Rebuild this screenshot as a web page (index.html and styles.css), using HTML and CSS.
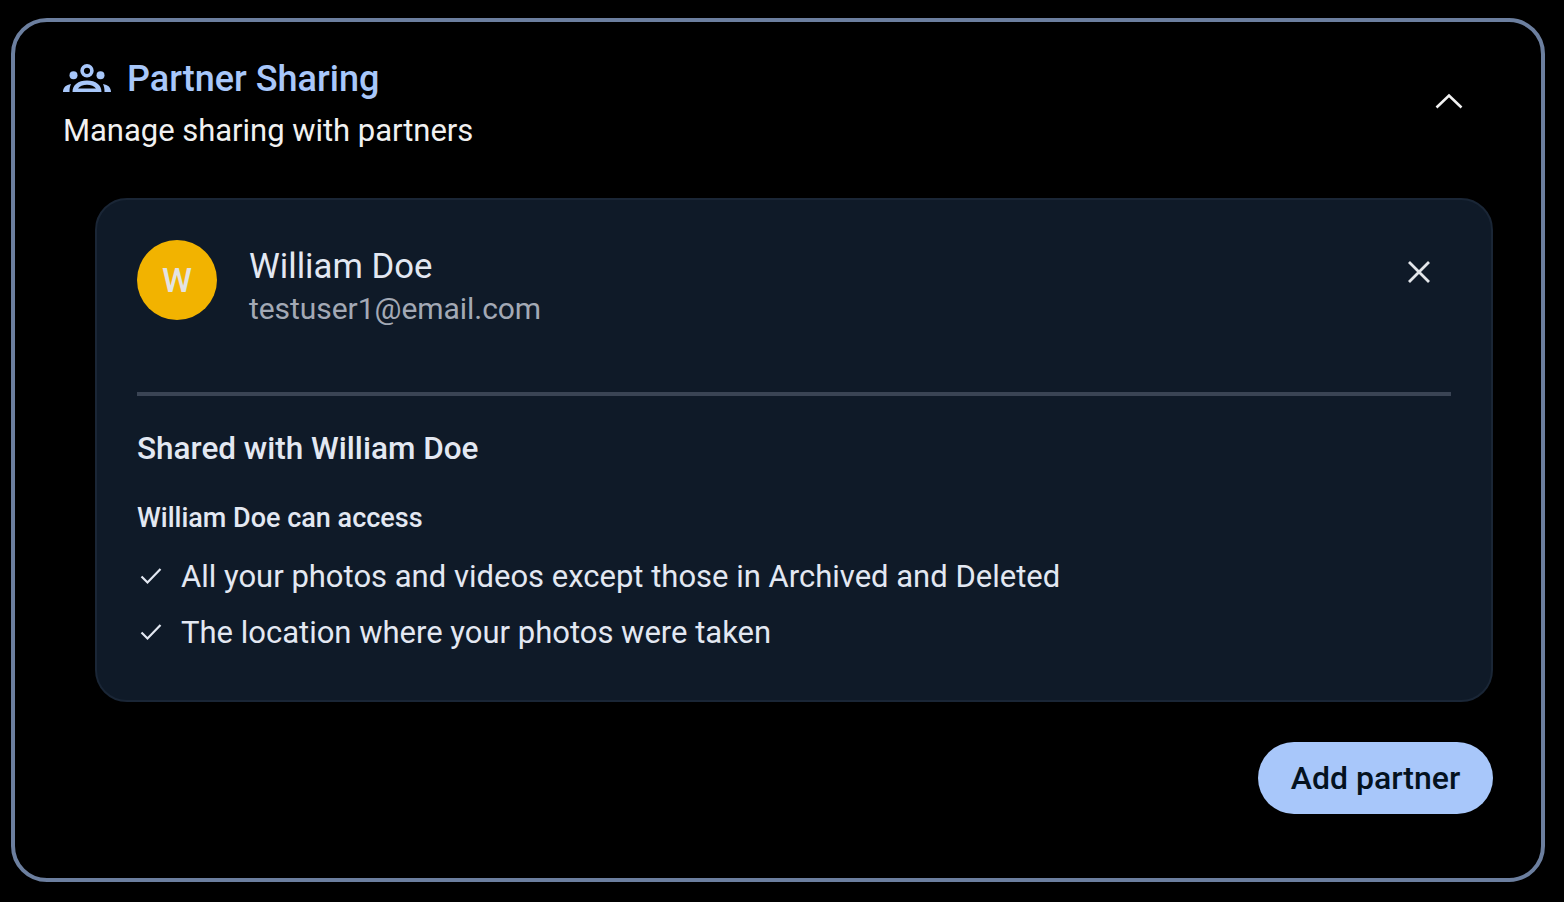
FILE: index.html
```html
<!DOCTYPE html>
<html lang="en">
<head>
<meta charset="utf-8">
<title>Partner Sharing</title>
<link rel="stylesheet" href="styles.css">
</head>
<body>
<section class="frame">
  <header class="head">
    <div class="head-text">
      <div class="title-row">
        <svg class="groups" viewBox="0 0 48 28" aria-hidden="true">
          <circle cx="24" cy="6.800" r="4.900" fill="none" stroke="#a8c7fa" stroke-width="3.600"/>
          <circle cx="10.500" cy="11.200" r="4" fill="#a8c7fa"/>
          <circle cx="37.500" cy="11.200" r="4" fill="#a8c7fa"/>
          <path d="M0 28C0 23.500 3 20.800 8 20C6.800 22.500 6.500 25 6.500 28Z" fill="#a8c7fa"/>
          <path d="M48 28C48 23.500 45 20.800 40 20C41.200 22.500 41.500 25 41.500 28Z" fill="#a8c7fa"/>
          <path fill-rule="evenodd" d="M9.500 28C9.500 21 15 16.500 24 16.500C33 16.500 38.500 21 38.500 28ZM15 24.500H33C31.500 22.300 28 20.800 24 20.800C20 20.800 16.500 22.300 15 24.500Z" fill="#a8c7fa"/>
        </svg>
        <h1 class="title">Partner Sharing</h1>
      </div>
      <p class="subtitle">Manage sharing with partners</p>
    </div>
    <svg class="chevron" viewBox="0 0 28 16" aria-hidden="true"><path d="M1.500 14.500L14 2.500L26.500 14.500" fill="none" stroke="#f1f1f1" stroke-width="2.600"/></svg>
  </header>

  <article class="card">
    <div class="person">
      <div class="avatar">W</div>
      <div class="who">
        <div class="name">William Doe</div>
        <div class="email">testuser1@email.com</div>
      </div>
      <svg class="close" viewBox="0 0 24 24" aria-hidden="true"><path d="M2 2L22 22M22 2L2 22" fill="none" stroke="#e3e6ea" stroke-width="2.800"/></svg>
    </div>
    <div class="rule"></div>
    <h2 class="shared">Shared with William Doe</h2>
    <h3 class="access">William Doe can access</h3>
    <ul class="perms">
      <li class="perm"><svg class="check" viewBox="0 0 22 18" aria-hidden="true"><path d="M1.500 9.500L7.500 15.500L20.500 2" fill="none" stroke="#e3e8f2" stroke-width="2.200"/></svg><span>All your photos and videos except those in Archived and Deleted</span></li>
      <li class="perm"><svg class="check" viewBox="0 0 22 18" aria-hidden="true"><path d="M1.500 9.500L7.500 15.500L20.500 2" fill="none" stroke="#e3e8f2" stroke-width="2.200"/></svg><span>The location where your photos were taken</span></li>
    </ul>
  </article>

  <div class="actions"><button class="add" type="button">Add partner</button></div>
</section>
</body>
</html>
```
FILE: styles.css
```css
* { box-sizing: border-box; }
html, body { height: 100%; }
body {
  margin: 0;
  background: #000;
  font-family: Roboto, "Noto Sans", sans-serif;
  overflow: hidden;
}
.frame {
  margin: 18px 19px 0 11px;
  height: 864px;
  border: 4px solid #6c7f9f;
  border-radius: 36px;
  padding: 34px 48px 0 48px;
}
.head {
  display: flex;
  justify-content: space-between;
  align-items: flex-start;
  height: 142px;
}
.head-text { display: flex; flex-direction: column; }
.title-row { display: flex; align-items: center; gap: 16px; height: 46px; }
.groups { width: 48px; height: 28px; margin-top: -2px; }
.title {
  margin: 0;
  font-size: 36px;
  line-height: 46px;
  font-weight: 500;
  color: #a8c7fa;
}
.subtitle {
  margin: 9px 0 0;
  font-size: 31px;
  line-height: 40px;
  color: #f1f1f1;
  letter-spacing: -0.03px;
}
.chevron { width: 28px; height: 16px; margin: 37px 30px 0 0; }
.card {
  margin-left: 32px;
  height: 504px;
  background: #0f1a28;
  border: 2px solid #1a2636;
  border-radius: 32px;
  padding: 40px 40px 0;
}
.person { display: flex; align-items: flex-start; height: 152px; }
.avatar {
  width: 80px;
  height: 80px;
  border-radius: 50%;
  background: #f2b300;
  color: #e3e3e3;
  display: flex;
  align-items: center;
  justify-content: center;
  font-size: 34px;
  font-weight: 500;
  flex: none;
}
.who { margin-left: 32px; flex: 1; }
.name { font-size: 34.700px; line-height: 46px; color: #e3e8f2; margin-top: 3px; }
.email { font-size: 30px; line-height: 40px; color: #a3a9b5; letter-spacing: -0.05px; }
.close { width: 24px; height: 24px; margin: 20px 20px 0 0; }
.rule { height: 4px; background: #3a4454; }
.shared {
  margin: 33px 0 0;
  font-size: 31.500px;
  line-height: 40px;
  font-weight: 500;
  color: #e3e8f2;
}
.access {
  margin: 32px 0 0;
  font-size: 27px;
  line-height: 34px;
  font-weight: 500;
  color: #e3e8f2;
}
.perms { list-style: none; margin: 13px 0 0; padding: 0; }
.perm {
  display: flex;
  align-items: center;
  height: 56px;
  font-size: 31px;
  color: #e3e8f2;
}
.check { width: 22px; height: 18px; margin: 0 19px 0 3px; flex: none; }
.actions { display: flex; justify-content: flex-end; margin-top: 40px; }
.add {
  width: 235px;
  height: 72px;
  border: 0;
  border-radius: 36px;
  background: #a8c7fa;
  color: #04121f;
  font-family: inherit;
  font-size: 32px;
  font-weight: 500;
  padding: 0;
}
```
